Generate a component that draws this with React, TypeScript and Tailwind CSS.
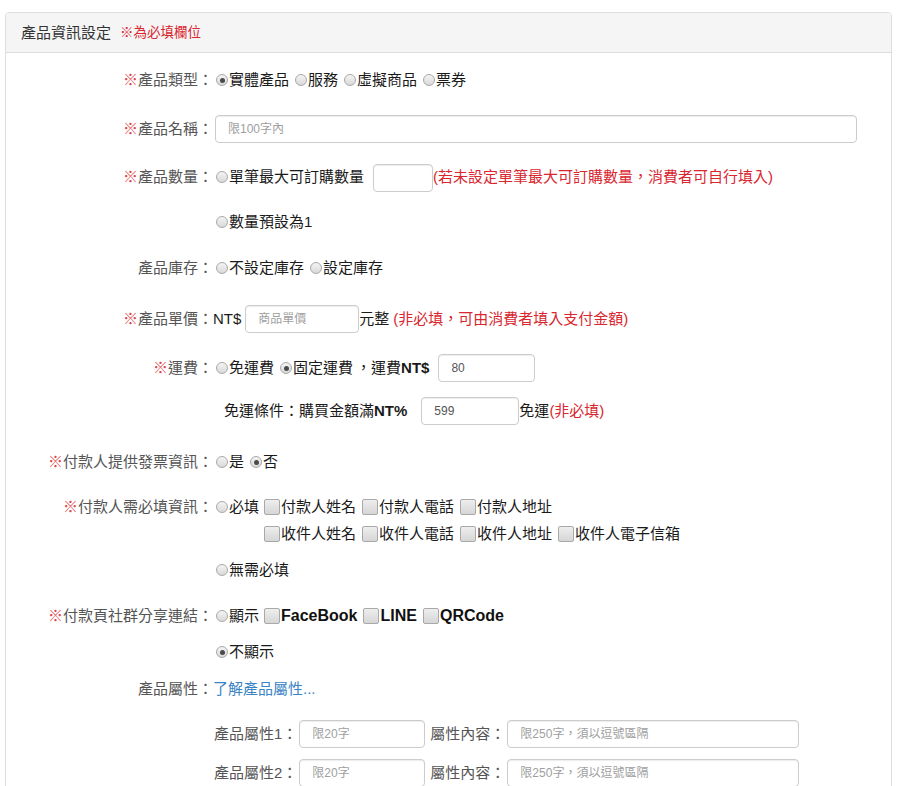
import React from "react";

const FONT = { fontFamily: '"Liberation Sans", "Noto Sans CJK TC", sans-serif' };

function Radio({ checked = false }: { checked?: boolean }) {
  return (
    <span className="ml-[3px] mr-[1px] inline-flex h-[12px] w-[12px] shrink-0 items-center justify-center rounded-full border border-[#a9a9a9] bg-gradient-to-b from-[#f4f4f4] to-[#d9d9d9]">
      {checked && <span className="h-[5px] w-[5px] rounded-full bg-[#4a4a4a]" />}
    </span>
  );
}

function Check() {
  return (
    <span className="ml-[5px] mr-[1px] inline-block h-[16px] w-[16px] shrink-0 rounded-[2px] border border-[#a9a9a9] bg-gradient-to-b from-[#eeeeee] to-[#d6d6d6]" />
  );
}

function Opt({ checked, children }: { checked?: boolean; children: React.ReactNode }) {
  return (
    <span className="mr-[3px] inline-flex items-center">
      <Radio checked={checked} />
      <span>{children}</span>
    </span>
  );
}

function CItem({ children, bold }: { children: React.ReactNode; bold?: boolean }) {
  return (
    <span className="mr-[1px] inline-flex items-center">
      <Check />
      <span className={bold ? "text-[16px] font-bold text-[#111]" : ""}>{children}</span>
    </span>
  );
}

function Input({ w, placeholder, value }: { w: string; placeholder?: string; value?: string }) {
  return (
    <span
      className={`${w} inline-flex h-[28px] shrink-0 items-center rounded-[4px] border border-[#cccccc] bg-white pl-[12px] text-[12px] shadow-[inset_0_1px_1px_rgba(0,0,0,0.075)]`}
    >
      {value ? (
        <span className="text-[#555]">{value}</span>
      ) : (
        <span className="text-[#a0a0a0]">{placeholder}</span>
      )}
    </span>
  );
}

function Label({ req, children }: { req?: boolean; children: React.ReactNode }) {
  return (
    <div className="w-[207px] shrink-0 text-right text-[#555]">
      {req && <span className="text-[#e0454d]">※</span>}
      {children}：
    </div>
  );
}

function Row({ mt, label, req, children, h = "h-[30px]" }: { mt: string; label?: string; req?: boolean; children: React.ReactNode; h?: string }) {
  return (
    <div className={`${mt} flex ${h} items-center`}>
      {label ? <Label req={req}>{label}</Label> : <div className="w-[207px] shrink-0" />}
      <div className="flex items-center text-[#1a1a1a]">{children}</div>
    </div>
  );
}

const RED = "text-[#d9262f]";

export default function App() {
  return (
    <div className="min-h-[786px] bg-white pt-[12px] text-[15px] leading-[20px]" style={FONT}>
      <div className="ml-[5px] w-[887px] overflow-hidden rounded-t-[4px] border border-[#dddddd] pb-[40px]">
        <div className="flex h-[40px] items-center border-b border-[#dddddd] bg-[#f5f5f5] pl-[15px] text-[#333]">
          <span>產品資訊設定</span>
          <span className="ml-[9px] text-[13.5px] text-[#d9262f]">※為必填欄位</span>
        </div>
        <div className="pt-[12px]">
          <Row mt="mt-0" label="產品類型" req>
            <Opt checked>實體產品</Opt>
            <Opt>服務</Opt>
            <Opt>虛擬商品</Opt>
            <Opt>票券</Opt>
          </Row>
          <Row mt="mt-[19px]" label="產品名稱" req>
            <span className="ml-[2px]">
              <Input w="w-[642px]" placeholder="限100字內" />
            </span>
          </Row>
          <Row mt="mt-[18px]" label="產品數量" req>
            <Radio />
            <span>單筆最大可訂購數量</span>
            <span className="ml-[9px]">
              <Input w="w-[60px]" />
            </span>
            <span className={RED}>(若未設定單筆最大可訂購數量，消費者可自行填入)</span>
          </Row>
          <Row mt="mt-[15px]">
            <Opt>數量預設為1</Opt>
          </Row>
          <Row mt="mt-[16px]" label="產品庫存">
            <Opt>不設定庫存</Opt>
            <Opt>設定庫存</Opt>
          </Row>
          <Row mt="mt-[21px]" label="產品單價" req>
            <span>NT$</span>
            <span className="ml-[4px]">
              <Input w="w-[114px]" placeholder="商品單價" />
            </span>
            <span>元整</span>
            <span className={`ml-[4px] ${RED}`}>(非必填，可由消費者填入支付金額)</span>
          </Row>
          <Row mt="mt-[19px]" label="運費" req>
            <Opt>免運費</Opt>
            <Opt checked>固定運費</Opt>
            <span>，運費<span className="font-bold">NT$</span></span>
            <span className="ml-[9px]">
              <Input w="w-[97px]" value="80" />
            </span>
          </Row>
          <Row mt="mt-[13px]">
            <span className="ml-[11px]">免運條件：購買金額滿<span className="font-bold">NT%</span></span>
            <span className="ml-[14px]">
              <Input w="w-[98px]" value="599" />
            </span>
            <span>免運</span>
            <span className={RED}>(非必填)</span>
          </Row>
          <Row mt="mt-[21px]" label="付款人提供發票資訊" req>
            <Opt>是</Opt>
            <Opt checked>否</Opt>
          </Row>
          <div className="mt-[15px] flex">
            <div className="flex h-[30px] items-center">
              <Label req>付款人需必填資訊</Label>
            </div>
            <div className="flex items-start text-[#1a1a1a]">
              <div className="flex h-[30px] items-center">
                <Radio />
                <span>必填</span>
              </div>
              <div className="flex flex-col">
                <div className="flex h-[30px] items-center">
                  <CItem>付款人姓名</CItem>
                  <CItem>付款人電話</CItem>
                  <CItem>付款人地址</CItem>
                </div>
                <div className="flex h-[24px] items-center">
                  <CItem>收件人姓名</CItem>
                  <CItem>收件人電話</CItem>
                  <CItem>收件人地址</CItem>
                  <CItem>收件人電子信箱</CItem>
                </div>
              </div>
            </div>
          </div>
          <Row mt="mt-[9px]">
            <Opt>無需必填</Opt>
          </Row>
          <Row mt="mt-[16px]" label="付款頁社群分享連結" req>
            <Radio />
            <span>顯示</span>
            <CItem bold>FaceBook</CItem>
            <CItem bold>LINE</CItem>
            <CItem bold>QRCode</CItem>
          </Row>
          <Row mt="mt-[6px]">
            <Opt checked>不顯示</Opt>
          </Row>
          <Row mt="mt-[7px]" label="產品屬性">
            <span className="text-[#3a84c5]">了解產品屬性...</span>
          </Row>
          <Row mt="mt-[15px]">
            <span className="ml-[1px] text-[#555]">產品屬性1：</span>
            <span className="ml-[2px]">
              <Input w="w-[126px]" placeholder="限20字" />
            </span>
            <span className="ml-[5px] text-[#555]">屬性內容：</span>
            <span className="ml-[2px]">
              <Input w="w-[292px]" placeholder="限250字，須以逗號區隔" />
            </span>
          </Row>
          <Row mt="mt-[9px]">
            <span className="ml-[1px] text-[#555]">產品屬性2：</span>
            <span className="ml-[2px]">
              <Input w="w-[126px]" placeholder="限20字" />
            </span>
            <span className="ml-[5px] text-[#555]">屬性內容：</span>
            <span className="ml-[2px]">
              <Input w="w-[292px]" placeholder="限250字，須以逗號區隔" />
            </span>
          </Row>
        </div>
      </div>
    </div>
  );
}
